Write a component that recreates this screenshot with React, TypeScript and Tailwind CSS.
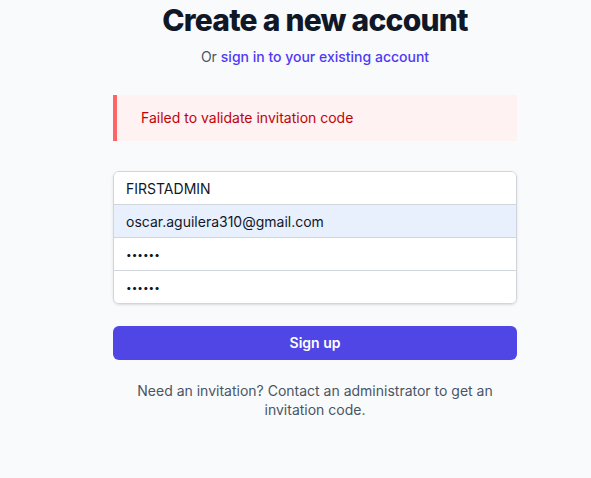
import React from 'react';

const App = () => {
  return (
    <div className="min-h-[478px] bg-gray-50 font-['Inter',sans-serif]">
      <div className="ml-[113px] w-[404px] pt-[2px]">
        <h1 className="text-center text-[30px] leading-9 font-extrabold tracking-tight text-gray-900">
          Create a new account
        </h1>
        <p className="mt-[9px] text-center text-sm text-gray-600">
          Or{' '}
          <a href="#" className="font-medium text-indigo-600">
            sign in to your existing account
          </a>
        </p>

        <div className="mt-[28px] border-l-4 border-red-400 bg-red-50 py-[13px] pl-6">
          <p className="text-sm leading-5 text-red-700">Failed to validate invitation code</p>
        </div>

        <form className="mt-[30px]">
          <div className="overflow-hidden rounded-md border border-gray-300 shadow-sm">
            <input
              readOnly
              defaultValue="FIRSTADMIN"
              className="block h-[33px] w-full border-b border-gray-300 bg-white px-3 text-sm text-gray-900 outline-none"
            />
            <input
              readOnly
              defaultValue="oscar.aguilera310@gmail.com"
              className="block h-[33px] w-full border-b border-gray-300 bg-[#e8f0fe] px-3 text-sm text-gray-900 outline-none"
            />
            <input
              readOnly
              type="password"
              defaultValue="secret"
              className="block h-[33px] w-full border-b border-gray-300 bg-white px-3 text-[10px] text-gray-900 outline-none"
            />
            <input
              readOnly
              type="password"
              defaultValue="secret"
              className="block h-[32px] w-full bg-white px-3 text-[10px] text-gray-900 outline-none"
            />
          </div>

          <button
            type="button"
            className="mt-[22px] flex h-[34px] w-full items-center justify-center rounded-md bg-[#4f46e5] text-sm font-semibold text-white"
          >
            Sign up
          </button>
        </form>

        <p className="mx-auto mt-[21px] w-[360px] text-center text-sm leading-[19px] text-gray-600">
          Need an invitation? Contact an administrator to get an invitation code.
        </p>
      </div>
    </div>
  );
};

export default App;
